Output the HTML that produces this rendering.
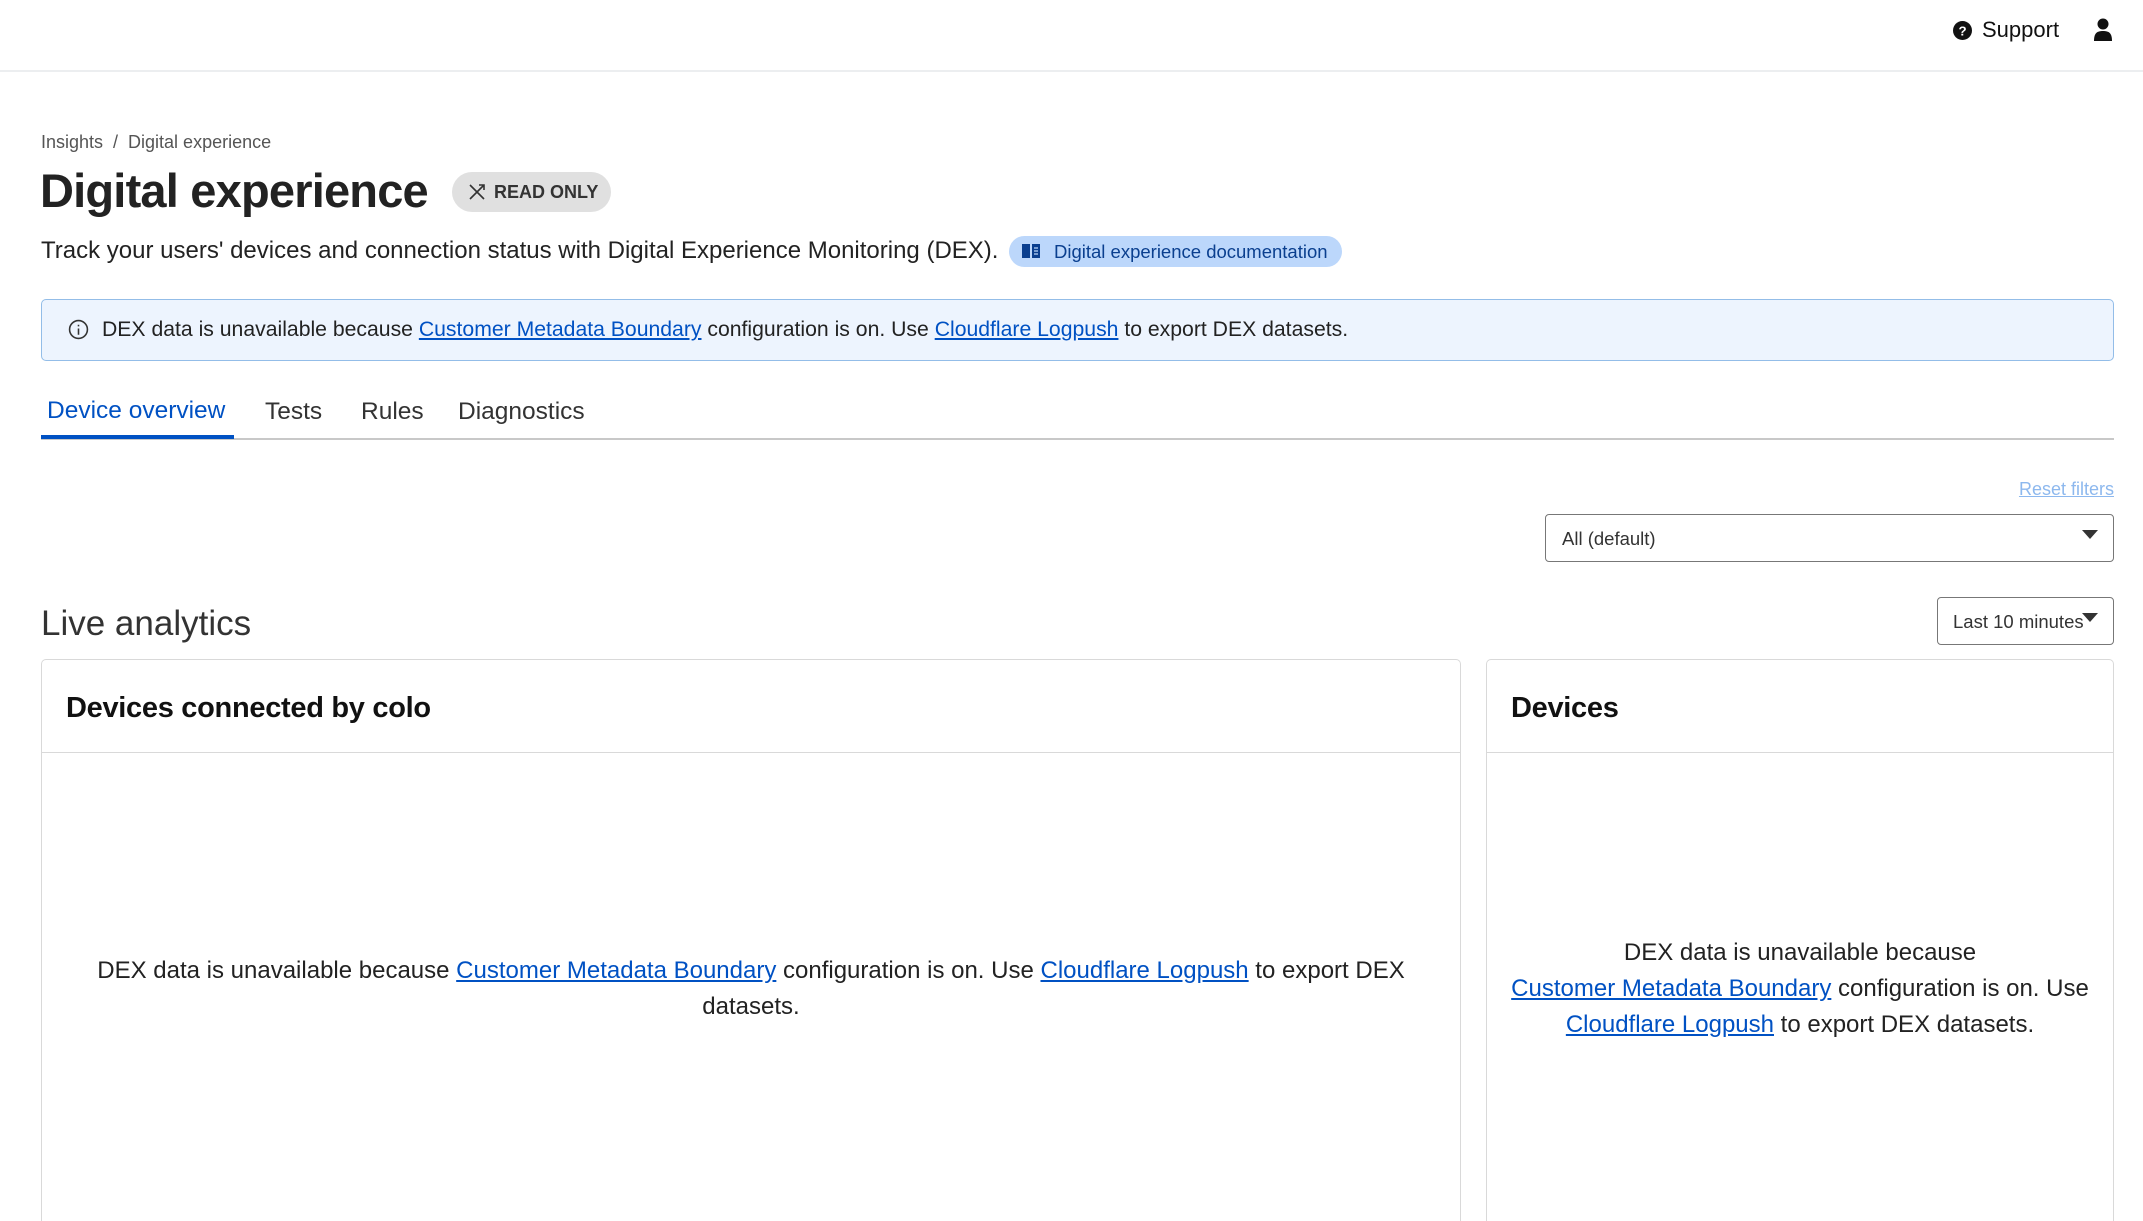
<!DOCTYPE html>
<html><head><meta charset="utf-8">
<style>
*{box-sizing:border-box;margin:0;padding:0}
body{width:2143px;height:1221px;overflow:hidden;background:#fff;font-family:"Liberation Sans",Arial,sans-serif;color:#222;position:relative}
.abs{position:absolute}
a{color:#0051c3;text-decoration:underline}
.hdr{left:0;top:0;width:2143px;height:72px;border-bottom:2px solid #eceef0}
.card{border:1px solid #d9d9d9;border-bottom:none;border-radius:5px 5px 0 0;background:#fff}
.card h3{font-size:29px;font-weight:bold;color:#111;padding:0 24px;height:93px;line-height:96px;border-bottom:1px solid #d9d9d9;letter-spacing:-0.3px}
.msg{font-size:24px;line-height:36px;text-align:center;color:#222}
</style></head><body>
<div class="abs hdr"></div>
<svg class="abs" style="left:1953px;top:21px" width="19" height="19" viewBox="0 0 20 20"><circle cx="10" cy="10" r="10" fill="#111"/><text x="10" y="15" font-size="14" font-weight="bold" fill="#fff" text-anchor="middle" font-family="Liberation Sans">?</text></svg>
<div class="abs" style="left:1982px;top:17px;font-size:22px;color:#111">Support</div>
<svg class="abs" style="left:2094px;top:18px" width="18" height="24" viewBox="0 0 18 24"><circle cx="9" cy="6" r="5.5" fill="#111"/><path d="M0 23 C0 15 3 13 9 13 C15 13 18 15 18 23 Z" fill="#111"/></svg>

<div class="abs" style="left:41px;top:132px;font-size:18px;color:#555">Insights&nbsp;&nbsp;/&nbsp;&nbsp;Digital experience</div>
<div class="abs" style="left:40px;top:163px;font-size:47px;font-weight:bold;color:#222;letter-spacing:-0.8px">Digital experience</div>
<div class="abs" style="left:452px;top:172px;width:159px;height:40px;border-radius:20px;background:#e0e0e0;font-size:18px;font-weight:bold;color:#333;line-height:40px;padding-left:42px">READ ONLY</div>
<svg class="abs" style="left:467px;top:182px" width="20" height="20" viewBox="0 0 20 20" fill="none" stroke="#333" stroke-width="1.6"><path d="M3 17 L17 3 M3 3 L17 17 M12 3 L17 3 L17 8"/></svg>
<div class="abs" style="left:41px;top:237px;font-size:24px;color:#222">Track your users' devices and connection status with Digital Experience Monitoring (DEX).</div>
<div class="abs" style="left:1009px;top:236px;width:333px;height:31px;border-radius:16px;background:#bcd7fb;font-size:18.5px;color:#0a3f8f;line-height:31px;padding-left:45px">Digital experience documentation</div>
<svg class="abs" style="left:1021px;top:243px" width="20" height="16" viewBox="0 0 20 16"><path d="M1 1 H9 V15 H1 Z M11 1 H19 V15 H11 Z" fill="#0a3f8f"/><path d="M13 5h4M13 8h4M13 11h4" stroke="#bcd7fb" stroke-width="1.2"/></svg>

<div class="abs" style="left:41px;top:299px;width:2073px;height:62px;border:1.5px solid #93bde8;border-radius:5px;background:#edf4fe"></div>
<svg class="abs" style="left:68px;top:319px" width="21" height="21" viewBox="0 0 20 20" fill="none" stroke="#333" stroke-width="1.5"><circle cx="10" cy="10" r="8.5"/><path d="M10 9v6M10 5.5v1.5"/></svg>
<div class="abs" style="left:102px;top:318px;font-size:21.2px;color:#222">DEX data is unavailable because <a>Customer Metadata Boundary</a> configuration is on. Use <a>Cloudflare Logpush</a> to export DEX datasets.</div>

<div class="abs" style="left:41px;top:438px;width:2073px;height:2px;background:#c8c8c8"></div>
<div class="abs" style="left:41px;top:435px;width:193px;height:4px;background:#0051c3"></div>
<div class="abs" style="left:47px;top:397px;font-size:24.5px;color:#0051c3">Device overview</div>
<div class="abs" style="left:265px;top:398px;font-size:24.5px;color:#333">Tests</div>
<div class="abs" style="left:361px;top:398px;font-size:24.5px;color:#333">Rules</div>
<div class="abs" style="left:458px;top:398px;font-size:24.5px;color:#333">Diagnostics</div>

<div class="abs" style="right:29px;top:479px;font-size:18px;color:#8db8ee;text-decoration:underline">Reset filters</div>
<div class="abs" style="left:1545px;top:514px;width:569px;height:48px;border:1.5px solid #777;border-radius:4px;font-size:18.5px;line-height:48px;padding-left:16px;color:#333">All (default)</div>
<svg class="abs" style="left:2082px;top:530px" width="16" height="10"><path d="M0 0H16L8 9Z" fill="#333"/></svg>

<div class="abs" style="left:41px;top:604px;font-size:35px;color:#333">Live analytics</div>
<div class="abs" style="left:1937px;top:597px;width:177px;height:48px;border:1.5px solid #777;border-radius:4px;font-size:18.5px;line-height:48px;padding-left:15px;color:#333">Last 10 minutes</div>
<svg class="abs" style="left:2082px;top:613px" width="16" height="10"><path d="M0 0H16L8 9Z" fill="#333"/></svg>

<div class="abs card" style="left:41px;top:659px;width:1420px;height:562px"><h3>Devices connected by colo</h3>
<div class="msg" style="padding:200px 50px 0">DEX data is unavailable because <a>Customer Metadata Boundary</a> configuration is on. Use <a>Cloudflare Logpush</a> to export DEX datasets.</div></div>
<div class="abs card" style="left:1486px;top:659px;width:628px;height:562px"><h3>Devices</h3>
<div class="msg" style="padding:182px 20px 0">DEX data is unavailable because<br><a>Customer Metadata Boundary</a> configuration is on. Use<br><a>Cloudflare Logpush</a> to export DEX datasets.</div></div>
</body></html>
